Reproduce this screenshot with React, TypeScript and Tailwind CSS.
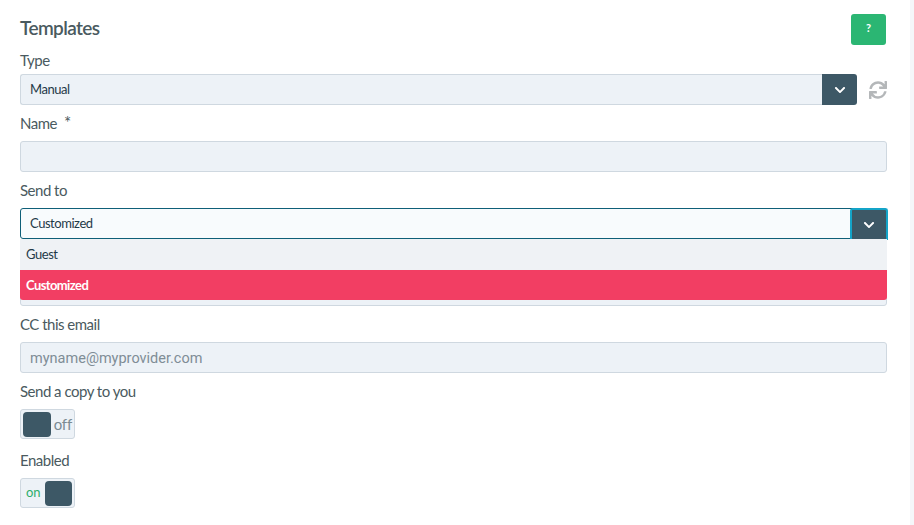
import { FaChevronDown, FaSync } from 'react-icons/fa';

const font = { fontFamily: 'Lato, sans-serif' };

const labelClass = 'h-[36px] flex items-end pb-[8px] text-[15px] leading-[20px] text-[#4a5a60] tracking-[-0.5px]';
const inputClass = 'h-[31px] w-full rounded-[3px] border border-[#cfd8e0] bg-[#edf2f7] px-[9px] flex items-center';

const SelectChevron = ({ active }: { active?: boolean }) => (
  <div
    className={
      active
        ? 'w-[38px] h-[32px] -mt-px -mr-[2px] self-start shrink-0 flex items-center justify-center rounded-t-[3px] bg-[#3d5866] border-2 border-b-0 border-[#14a4c8]'
        : 'w-[35px] h-[31px] shrink-0 flex items-center justify-center rounded-r-[3px] bg-[#3d5866]'
    }
  >
    <FaChevronDown size={12} className="text-white" />
  </div>
);

const Toggle = ({ on }: { on?: boolean }) => (
  <div className="w-[55px] h-[30px] rounded-[3px] border border-[#cfd8e0] bg-[#edf2f7] flex items-center px-[2px] gap-[3px] text-[14px] tracking-[-0.2px]">
    {on && <span className="ml-[3px] w-[17px] text-[13px] text-[#2fae6b]">on</span>}
    <div className="w-[28px] h-[25px] rounded-[4px] bg-[#3d5866]" />
    {!on && <span className="text-[#7a8a92] text-[15px]">off</span>}
  </div>
);

export default function App() {
  return (
    <div className="w-[914px] h-[525px] bg-[#f5f7fa] overflow-hidden" style={font}>
      <div className="w-[910px] h-full bg-white pl-[20px] pr-[23px] pt-[14px]">
        <div className="flex items-start justify-between h-[24px]">
          <h1 className="text-[19px] leading-[28px] font-semibold text-[#4a5a60] tracking-[-0.6px]">Templates</h1>
          <button className="w-[35px] h-[31px] mr-px rounded-[3px] bg-[#2bb673] text-white text-[11px] font-bold pb-[3px]">?</button>
        </div>

        <div className="h-[36px] flex items-end pb-[4px] text-[15px] leading-[20px] text-[#4a5a60] tracking-[-0.5px]">Type</div>
        <div className="flex items-center">
          <div className="h-[31px] flex-1 rounded-l-[3px] border border-[#cfd8e0] border-r-0 bg-[#edf2f7] px-[9px] pt-px flex items-center text-[13px] text-[#1f3a48] tracking-[-0.45px]">Manual</div>
          <SelectChevron />
          <div className="w-[30px] flex justify-end">
            <FaSync size={18} className="text-[#b4b7b9]" />
          </div>
        </div>

        <div className={labelClass}>
          Name<span className="ml-[7px] text-[17px]">*</span>
        </div>
        <div className={inputClass} />

        <div className={labelClass}>Send to</div>
        <div className="relative">
          <div className="h-[31px] flex items-center rounded-[3px] border border-[#0f5f78] bg-[#f8fbfd] pl-[9px] text-[13px] text-[#1f3a48] tracking-[-0.45px]">
            <span className="flex-1 pt-px">Customized</span>
            <SelectChevron active />
          </div>
          <div className="absolute left-0 right-0 top-[31px] z-10 rounded-b-[3px] overflow-hidden text-[13px] tracking-[-0.45px]">
            <div className="h-[31px] bg-[#eff2f5] pl-[6px] flex items-center text-[#1f3a48]">Guest</div>
            <div className="h-[30px] bg-[#f23e63] pl-[6px] pt-px flex items-center text-white font-bold tracking-[-0.6px]">Customized</div>
          </div>
        </div>

        <div className="h-[36px]" />
        <div className={inputClass} />

        <div className={labelClass}>CC this email</div>
        <div className={inputClass + ' text-[#7f8d96] text-[14.5px]'}>
          <span style={{ fontFamily: 'Roboto, sans-serif' }} className="pt-[2px]">myname@myprovider.com</span>
        </div>

        <div className={labelClass}>Send a copy to you</div>
        <Toggle />

        <div className="h-[39px] flex items-end pb-[8px] text-[15px] leading-[20px] text-[#4a5a60] tracking-[-0.5px]">Enabled</div>
        <Toggle on />
      </div>
    </div>
  );
}
